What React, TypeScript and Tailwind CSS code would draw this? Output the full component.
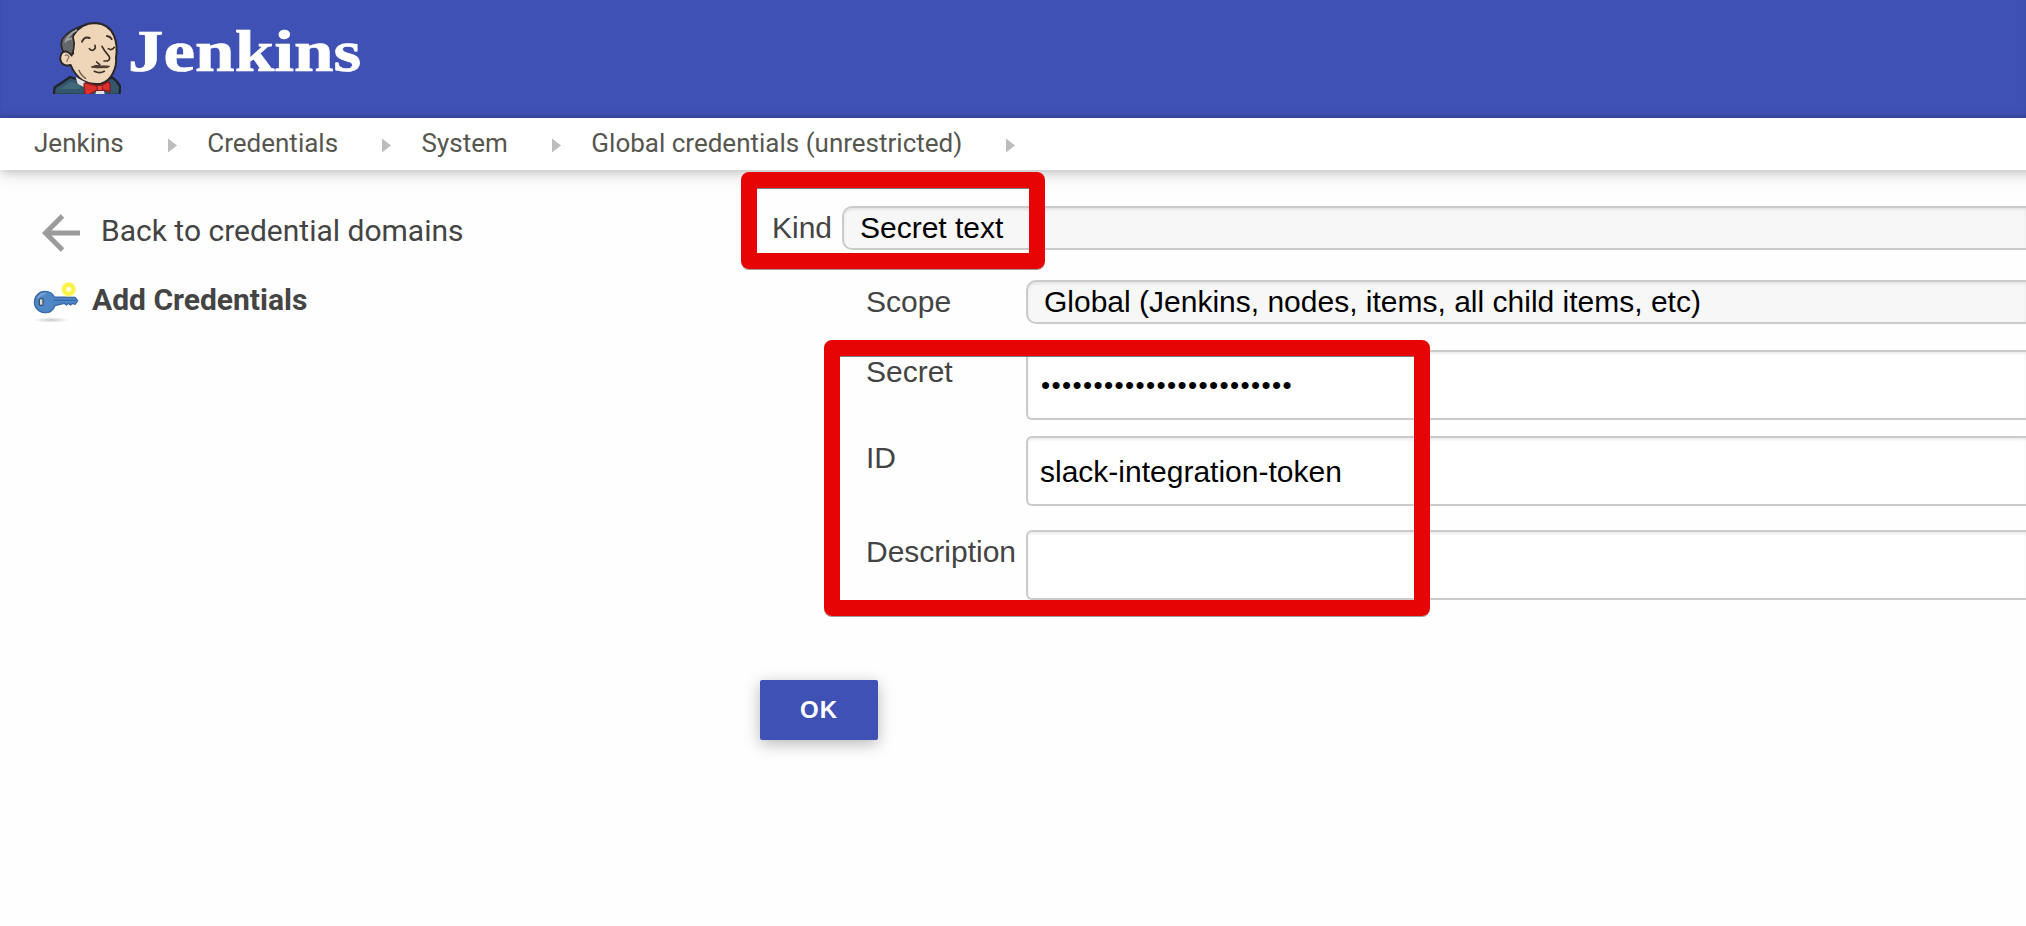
import type { ReactNode } from "react";

function ButlerLogo() {
  return (
    <svg className="h-[72px] w-[68px] shrink-0" viewBox="24 21 204 216">
      {/* jacket */}
      <path d="M26 240 L29 217 Q52 203 75 186 L120 200 L165 205 L200 187 Q216 196 226 216 L223 240 Z" fill="#33566a" stroke="#20222c" strokeWidth="7" strokeLinejoin="round" />
      <path d="M44 222 L78 200 L110 212 L100 222 Z" fill="#41697c" />
      {/* head */}
      <path d="M84 62 Q108 24 150 24 Q192 26 207 62 Q219 92 213 128 Q216 150 204 174 Q192 200 168 206 Q138 210 112 196 Q88 178 77 150 Q52 156 46 134 Q45 110 62 108 L84 116 Z" fill="#f0d6b8" stroke="#2c2726" strokeWidth="6" strokeLinejoin="round" />
      {/* hair */}
      <path d="M112 32 Q84 50 84 66 Q90 84 86 102 L80 122 Q68 106 55 110 Q44 92 52 72 Q70 46 112 32 Z" fill="#666769" stroke="#29282a" strokeWidth="5" strokeLinejoin="round" />
      <path d="M60 82 Q70 58 96 45 M62 76 L81 70" fill="none" stroke="#a3a4a6" strokeWidth="5" />
      <path d="M60 122 Q66 116 72 126 Q68 132 65 140" fill="none" stroke="#8f7560" strokeWidth="4" />
      {/* brows and eyes */}
      <path d="M111 80 Q118 64 134 69 M186 63 Q195 64 200 72" fill="none" stroke="#3b3029" strokeWidth="6" strokeLinecap="round" />
      <path d="M133 101 Q142 112 151 99 L150 91 M190 101 Q200 108 208 97" fill="none" stroke="#3b3029" strokeWidth="5" strokeLinecap="round" />
      {/* nose */}
      <path d="M171 94 Q178 108 190 121 Q199 132 187 138 L177 138" fill="none" stroke="#3b3029" strokeWidth="5" strokeLinecap="round" />
      {/* moustache and mouth */}
      <path d="M139 156 Q152 148 168 153 Q182 152 194 154 Q188 160 174 158 Q156 160 139 156 Z" fill="#574138" stroke="#4a372f" strokeWidth="3" />
      <path d="M155 141 L164 149 M148 169 Q164 177 178 169" fill="none" stroke="#3b3029" strokeWidth="5" strokeLinecap="round" />
      <path d="M102 166 Q108 182 122 190" fill="none" stroke="#6d5746" strokeWidth="4" strokeLinecap="round" />
      {/* collar */}
      <path d="M92 186 L122 202 L116 216 L98 206 Z M154 228 L176 226 L180 240 L150 240 Z" fill="#e4e2df" />
      {/* bow tie */}
      <path d="M117 206 Q120 202 134 207 L156 213 L170 211 L190 200 Q196 203 195 214 L195 230 L174 225 L156 225 L130 240 L120 238 Z" fill="#dc322b" stroke="#8b1c1f" strokeWidth="4" strokeLinejoin="round" />
      <path d="M156 212 L171 210 L173 226 L157 227 Z" fill="#e8433b" stroke="#7e1b1f" strokeWidth="3" />
    </svg>
  );
}

function KeyIcon() {
  return (
    <svg className="h-[60px] w-[70px] shrink-0" viewBox="0 0 210 180">
      <defs>
        <radialGradient id="keyShadow">
          <stop offset="0" stopColor="#c9c9c9" />
          <stop offset="1" stopColor="#c9c9c9" stopOpacity="0" />
        </radialGradient>
        <radialGradient id="spark">
          <stop offset="0" stopColor="#ffffff" />
          <stop offset="0.2" stopColor="#fffde0" />
          <stop offset="0.45" stopColor="#fdf233" />
          <stop offset="0.75" stopColor="#fdf250" />
          <stop offset="1" stopColor="#fdf250" stopOpacity="0" />
        </radialGradient>
      </defs>
      <ellipse cx="78" cy="150" rx="54" ry="8" fill="url(#keyShadow)" />
      <path d="M60 64 Q80 64 88 81 L150 82 L158 92 L150 103 L143 100 L137 105 L130 100 L124 105 L118 100 L90 107 Q82 128 60 128 Q42 127 32 112 Q24 96 33 79 Q43 64 60 64 Z" fill="#4f86c6" stroke="#3a69a8" strokeWidth="4" strokeLinejoin="round" />
      <path d="M86 91 L150 91" stroke="#3869a8" strokeWidth="4" />
      <path d="M38 86 Q46 71 62 71" fill="none" stroke="#7ba6d8" strokeWidth="5" />
      <rect x="43" y="86" width="11" height="20" rx="3" fill="#ddd9cf" stroke="#36516f" strokeWidth="4" />
      <circle cx="131" cy="58" r="24" fill="url(#spark)" />
    </svg>
  );
}

function Crumb({ children }: { children: ReactNode }) {
  return (
    <li className="flex items-center">
      <span>{children}</span>
      <svg className="mt-[3px] mr-[30.5px] ml-[44px] h-[15px] w-[9px]" viewBox="0 0 9 16" preserveAspectRatio="none">
        <path d="M0 0.5 L9 8 L0 15.5 Z" fill="#bdbdbd" />
      </svg>
    </li>
  );
}

function SelectBox({ children }: { children: ReactNode }) {
  return (
    <div className="h-11 flex-1 rounded-l-[10px] border-2 border-r-0 border-[#cbcbcb] bg-[#f7f7f7] pl-4 leading-10 text-black shadow-[inset_0_2px_3px_rgba(0,0,0,0.08)]">
      {children}
    </div>
  );
}

function TextBox({ children }: { children?: ReactNode }) {
  return (
    <div className="h-[70px] flex-1 rounded-l-md border-2 border-r-0 border-[#cbcbcb] bg-white pl-3 leading-[68px] text-black shadow-[inset_0_2px_3px_rgba(0,0,0,0.08)]">
      {children}
    </div>
  );
}

function Field({ label, children }: { label: string; children: ReactNode }) {
  return (
    <div className="flex">
      <label className="w-[160px] shrink-0 pt-[3px] leading-[38px]">{label}</label>
      {children}
    </div>
  );
}

export default function App() {
  return (
    <div className="relative h-[926px] w-[2026px] overflow-hidden bg-[#fefefe] font-['Roboto',sans-serif]">
      <header className="flex h-[118px] bg-[#4051b5] pt-[22px] pl-[53px] shadow-[inset_0_-4px_5px_-2px_rgba(0,0,0,0.15)]">
        <ButlerLogo />
        <span className="-mt-px ml-[7px] origin-left scale-x-[1.185] font-['Liberation_Serif',serif] text-[60px] leading-[60px] font-bold text-white [-webkit-text-stroke:0.7px_white]">
          Jenkins
        </span>
      </header>
      <nav className="relative -mr-5 h-[52px] bg-white pl-[34px] text-[26px] text-[#56564f] shadow-[0_4px_8px_-1px_rgba(0,0,0,0.16),0_6px_20px_0_rgba(0,0,0,0.09)]">
        <ul className="flex h-[51px] items-center">
          <Crumb>Jenkins</Crumb>
          <Crumb>Credentials</Crumb>
          <Crumb>System</Crumb>
          <Crumb>Global credentials (unrestricted)</Crumb>
        </ul>
      </nav>

      <div className="flex text-[30px] text-[#444444]">
        <aside className="w-[760px] shrink-0 pt-[40px]">
          <div className="flex h-[44px] items-center">
            <svg className="mt-[2px] mr-[21px] ml-[42px] h-[38px] w-[38px]" viewBox="0 0 38 38">
              <path d="M20.5 2 L3.5 19 L20.5 36 M4 19 H38" fill="none" stroke="#9b9b9b" strokeWidth="5" />
            </svg>
            <span className="-mt-[3px]">Back to credential domains</span>
          </div>
          <div className="mt-[16px] flex h-[60px] pl-[25px]">
            <KeyIcon />
            <span className="-ml-[3px] leading-[60px] font-bold">Add Credentials</span>
          </div>
        </aside>

        <main className="flex-1 pt-9 font-['Liberation_Sans',sans-serif]">
          <div className="flex pl-[12px]">
            <label className="w-[70px] leading-[44px]">Kind</label>
            <SelectBox>Secret text</SelectBox>
          </div>
          <div className="pl-[106px]">
            <div className="mt-[30px]">
              <Field label="Scope">
                <SelectBox>Global (Jenkins, nodes, items, all child items, etc)</SelectBox>
              </Field>
            </div>
            <div className="mt-[26px]">
              <Field label="Secret">
                <TextBox>
                  <span className="block pl-px text-[26px] leading-[66px] tracking-[1.4px]">••••••••••••••••••••••••</span>
                </TextBox>
              </Field>
            </div>
            <div className="mt-4">
              <Field label="ID">
                <TextBox>slack-integration-token</TextBox>
              </Field>
            </div>
            <div className="mt-6">
              <Field label="Description">
                <TextBox />
              </Field>
            </div>
          </div>
          <button className="mt-20 block h-[60px] w-[118px] rounded-[2px] bg-[#4051b5] text-center text-[24px] font-bold tracking-[1px] text-white shadow-[0_4px_16px_rgba(0,0,0,0.28)]">
            OK
          </button>
        </main>
      </div>

      <div className="absolute top-[172px] left-[741px] h-[97px] w-[304px] rounded-lg border-16 border-[#e60404] shadow-[0_1px_0_rgba(90,90,90,0.6),inset_0_1px_0_rgba(90,90,90,0.8)]" />
      <div className="absolute top-[340px] left-[824px] h-[276px] w-[606px] rounded-lg border-16 border-[#e60404] shadow-[0_1px_0_rgba(90,90,90,0.6),inset_0_1px_0_rgba(90,90,90,0.8)]" />
    </div>
  );
}
